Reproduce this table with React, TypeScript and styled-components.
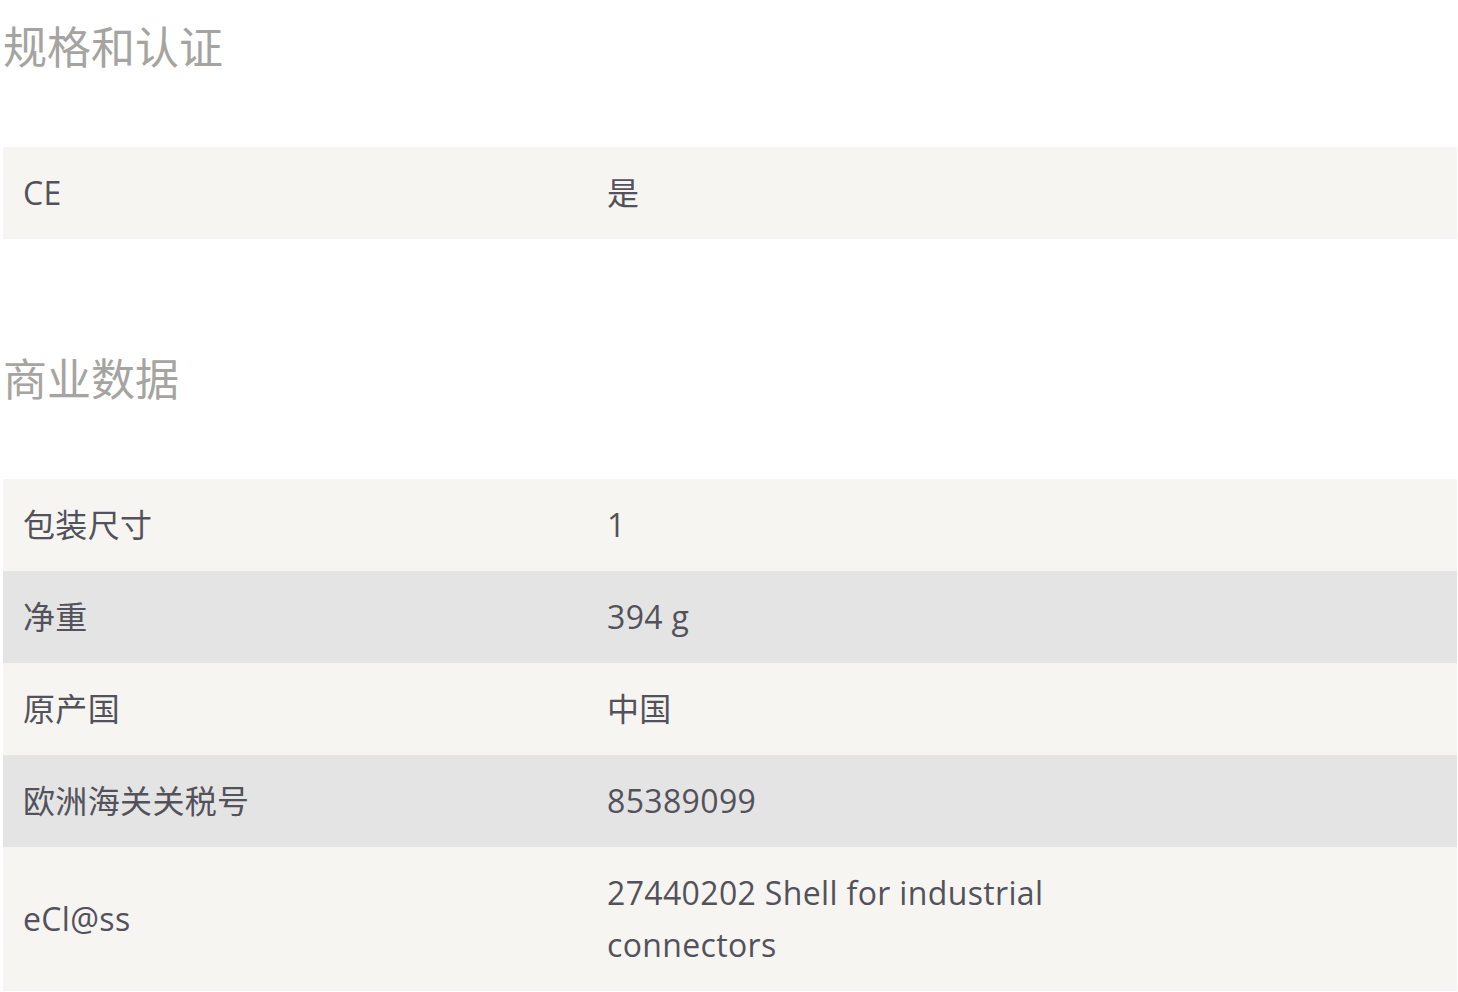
import React from "react";
import styled, { createGlobalStyle } from "styled-components";

const Global = createGlobalStyle`
  html, body { margin: 0; padding: 0; background: #ffffff; }
  body { font-family: "Open Sans", "Noto Sans CJK SC", sans-serif; }
`;

const Page = styled.div`
  padding: 19px 1px 0 3px;
  display: flex;
  flex-direction: column;
`;

const Section = styled.section<{ $gapTop: number }>`
  margin-top: ${(p) => p.$gapTop}px;
  display: flex;
  flex-direction: column;
`;

const Heading = styled.h2`
  margin: 0 0 75px 0;
  font-family: "Noto Sans CJK SC", sans-serif;
  font-weight: 400;
  font-size: 44px;
  line-height: 53px;
  color: #a5a4a0;
`;

const Table = styled.div`
  display: flex;
  flex-direction: column;
`;

const Row = styled.div<{ $shade: boolean }>`
  display: grid;
  grid-template-columns: 584px 584px 1fr;
  background: ${(p) => (p.$shade ? "#e4e4e4" : "#f6f5f2")};
  align-items: center;
`;

const Cell = styled.div`
  padding: 20px;
  font-size: 32px;
  line-height: 52px;
  letter-spacing: 0.35px;
  color: #53525a;
`;

type Item = { label: string; value: string };

const cert: Item[] = [{ label: "CE", value: "是" }];
const commerce: Item[] = [
  { label: "包装尺寸", value: "1" },
  { label: "净重", value: "394 g" },
  { label: "原产国", value: "中国" },
  { label: "欧洲海关关税号", value: "85389099" },
  { label: "eCl@ss", value: "27440202 Shell for industrial connectors" },
];

function DataTable({ items }: { items: Item[] }) {
  return (
    <Table>
      {items.map((it, i) => (
        <Row key={it.label} $shade={i % 2 === 1}>
          <Cell>{it.label}</Cell>
          <Cell>{it.value}</Cell>
          <Cell />
        </Row>
      ))}
    </Table>
  );
}

export default function App() {
  return (
    <>
      <Global />
      <Page>
        <Section $gapTop={0}>
          <Heading>规格和认证</Heading>
          <DataTable items={cert} />
        </Section>
        <Section $gapTop={112}>
          <Heading>商业数据</Heading>
          <DataTable items={commerce} />
        </Section>
      </Page>
    </>
  );
}
